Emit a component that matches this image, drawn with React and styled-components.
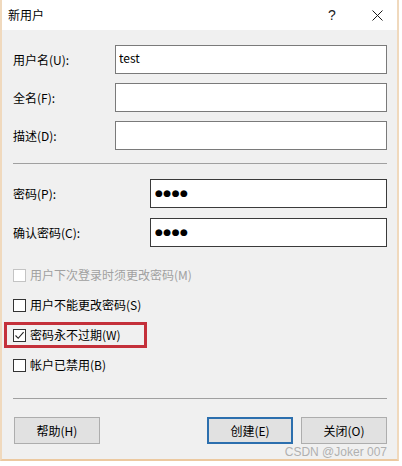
import React from 'react';
import styled, {createGlobalStyle} from 'styled-components';

const GlobalStyle = createGlobalStyle`
  html, body {
    margin: 0;
    padding: 0;
    background: #ffffff;
  }

  body {
    font-family: "Noto Sans CJK SC", "Noto Sans", sans-serif;
    font-size: 12px;
    color: #000000;
  }
`

const Window = styled.div`
  width: 399px;
  box-sizing: border-box;
  border-left: 2px solid #f0d9bd;
  border-right: 2px solid #f0d9bd;
  border-bottom: 2px solid #ecc9a0;
  background-color: #f0f0f0;
`

const TitleBar = styled.div`
  height: 30px;
  background-color: #ffffff;
  display: flex;
  align-items: center;
  padding-left: 6px;
`

const Title = styled.div`
  flex: 1;
  font-size: 12px;
  line-height: 16px;
`

const CaptionGroup = styled.div`
  display: flex;
  gap: 23px;
  padding-right: 9px;
`

const Caption = styled.div`
  width: 22px;
  height: 30px;
  display: flex;
  justify-content: center;
  align-items: center;
  font-family: "Liberation Sans", sans-serif;
  font-size: 14px;
  color: #1a1a1a;
`

const Body = styled.div`
  padding: 15px 10px 0 11px;
`

const Group = styled.div`
  display: flex;
  flex-direction: column;
  gap: ${props => props.$gap || 9}px;
`

const FormRow = styled.div`
  display: grid;
  grid-template-columns: ${props => props.$label}px 1fr;
  align-items: center;
`

const Label = styled.label`
  font-size: 12px;
  line-height: 16px;
  white-space: nowrap;
`

const Field = styled.input`
  height: 29px;
  width: 100%;
  box-sizing: border-box;
  margin: 0;
  border: 1px solid ${props => props.$dark ? '#3a3a3a' : '#7a7a7a'};
  background: #ffffff;
  outline: none;
  font-family: "Noto Sans CJK SC", "Noto Sans", sans-serif;
  font-size: 12px;
  color: #000000;
  padding: 0 3px 5px;
`

const Dots = styled(Field)`
  font-family: "DejaVu Sans", sans-serif;
  font-size: 9px;
  letter-spacing: 0.5px;
  padding: 0 4px 1px;
`

const Divider = styled.div`
  height: 1px;
  background-color: #a0a0a0;
  margin: ${props => props.$margin};
`

const Checks = styled.div`
  display: flex;
  flex-direction: column;
  margin-top: 13px;
`

const CheckRow = styled.div`
  position: relative;
  height: 30px;
  display: flex;
  align-items: center;
  gap: 4px;
  color: ${props => props.$disabled ? '#a0a0a0' : '#000000'};

  ${props => props.$marked && `
    &::after {
      content: "";
      position: absolute;
      left: -9px;
      top: 2px;
      width: 143px;
      height: 26px;
      box-sizing: border-box;
      border: 3px solid #c4303a;
    }
  `}
`

const Box = styled.span`
  width: 13px;
  height: 13px;
  box-sizing: border-box;
  border: 1px solid ${props => props.$disabled ? '#c4c4c4' : '#333333'};
  background: #ffffff;
  display: flex;
  justify-content: center;
  align-items: center;
`

const CheckText = styled.span`
  font-size: 12px;
  line-height: 16px;
`

const ButtonBar = styled.div`
  display: flex;
  align-items: center;
  gap: 8px;
  padding-left: 1px;
`

const Spacer = styled.div`
  flex: 1;
`

const Button = styled.button`
  width: 86px;
  height: 27px;
  box-sizing: border-box;
  margin: 0;
  padding: 0;
  border: ${props => props.$default ? '2px solid #2c6fae' : '1px solid #adadad'};
  background-color: #e1e1e1;
  font-family: "Noto Sans CJK SC", "Noto Sans", sans-serif;
  font-size: 12px;
  color: #000000;
  display: flex;
  justify-content: center;
  align-items: center;
`

const Watermark = styled.div`
  text-align: right;
  font-family: "Liberation Sans", sans-serif;
  font-size: 12px;
  line-height: 14px;
  color: #b0b0b0;
  margin-top: 1px;
  height: 14px;
`

function CloseIcon() {
  return (
    <svg width="11" height="11" viewBox="0 0 11 11">
      <path d="M0.5 0.5 L10.5 10.5 M10.5 0.5 L0.5 10.5" stroke="#1a1a1a" strokeWidth="1" fill="none"/>
    </svg>
  );
}

function CheckMark() {
  return (
    <svg width="11" height="11" viewBox="0 0 11 11">
      <path d="M1.5 5.5 L4.2 8.3 L9.6 2.2" stroke="#222222" strokeWidth="1.1" fill="none"/>
    </svg>
  );
}

function Check({label, checked, disabled, marked}) {
  return (
    <CheckRow $disabled={disabled} $marked={marked}>
      <Box $disabled={disabled}>{checked && <CheckMark/>}</Box>
      <CheckText>{label}</CheckText>
    </CheckRow>
  );
}

export default function App() {
  return (
    <>
      <GlobalStyle/>
      <Window>
        <TitleBar>
          <Title>新用户</Title>
          <CaptionGroup>
            <Caption>?</Caption>
            <Caption><CloseIcon/></Caption>
          </CaptionGroup>
        </TitleBar>
        <Body>
          <Group $gap={9}>
            <FormRow $label={102}>
              <Label>用户名(U):</Label>
              <Field readOnly value="test"/>
            </FormRow>
            <FormRow $label={102}>
              <Label>全名(F):</Label>
              <Field readOnly value=""/>
            </FormRow>
            <FormRow $label={102}>
              <Label>描述(D):</Label>
              <Field readOnly value=""/>
            </FormRow>
          </Group>

          <Divider $margin="13px 0 15px 0"/>

          <Group $gap={10}>
            <FormRow $label={137}>
              <Label>密码(P):</Label>
              <Dots $dark readOnly value="●●●●"/>
            </FormRow>
            <FormRow $label={137}>
              <Label>确认密码(C):</Label>
              <Dots $dark readOnly value="●●●●"/>
            </FormRow>
          </Group>

          <Checks>
            <Check label="用户下次登录时须更改密码(M)" disabled/>
            <Check label="用户不能更改密码(S)"/>
            <Check label="密码永不过期(W)" checked marked/>
            <Check label="帐户已禁用(B)"/>
          </Checks>

          <Divider $margin="18px 0 18px 0"/>

          <ButtonBar>
            <Button>帮助(H)</Button>
            <Spacer/>
            <Button $default>创建(E)</Button>
            <Button>关闭(O)</Button>
          </ButtonBar>
          <Watermark>CSDN @Joker 007</Watermark>
        </Body>
      </Window>
    </>
  );
}
